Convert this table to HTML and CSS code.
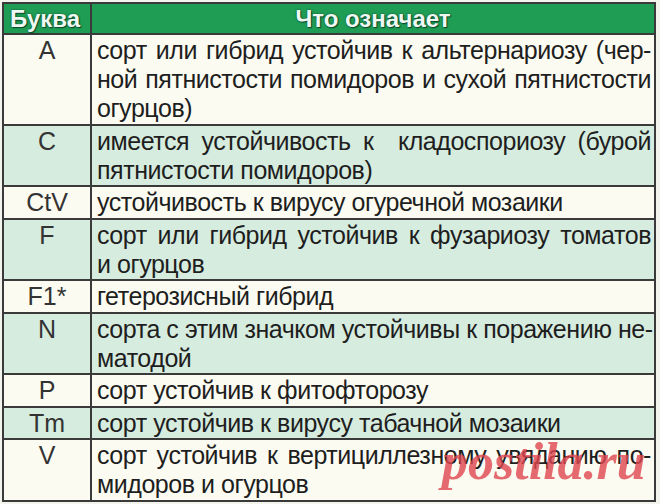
FILE: index.html
```html
<!DOCTYPE html>
<html lang="ru">
<head>
<meta charset="utf-8">
<link rel="stylesheet" href="styles.css">
</head>
<body>
<div class="page">
<div class="codes">
<div class="hd hd-letter">Буква</div><div class="hd hd-desc">Что означает</div>

<div class="letter light">A</div><div class="desc light"><span class="j">сорт или гибрид устойчив к альтернариозу (чер-</span><span class="j">ной пятнистости помидоров и сухой пятнистости</span><span class="l">огурцов)</span></div>
<div class="letter green">C</div><div class="desc green"><span class="j">имеется устойчивость к &nbsp;кладоспориозу (бурой</span><span class="l">пятнистости помидоров)</span></div>
<div class="letter light">CtV</div><div class="desc light"><span class="l">устойчивость к вирусу огуречной мозаики</span></div>
<div class="letter green">F</div><div class="desc green"><span class="j">сорт или гибрид устойчив к фузариозу томатов</span><span class="l">и огурцов</span></div>
<div class="letter light">F1*</div><div class="desc light"><span class="l">гетерозисный гибрид</span></div>
<div class="letter green">N</div><div class="desc green"><span class="j">сорта с этим значком устойчивы к поражению не-</span><span class="l">матодой</span></div>
<div class="letter light">P</div><div class="desc light"><span class="l">сорт устойчив к фитофторозу</span></div>
<div class="letter green">Tm</div><div class="desc green"><span class="l">сорт устойчив к вирусу табачной мозаики</span></div>
<div class="letter light">V</div><div class="desc light"><span class="j">сорт устойчив к вертициллезному увяданию по-</span><span class="l">мидоров и огурцов</span></div>
</div>
<div class="watermark">postila.ru</div>
</div>
</body>
</html>
```
FILE: styles.css
```css
html, body {
  margin: 0;
  padding: 0;
  background: #f4f4ee;
}
.page {
  position: relative;
  width: 660px;
  height: 504px;
  overflow: hidden;
  padding: 2px 0 0 2px;
  box-sizing: border-box;
}
.codes {
  display: grid;
  grid-template-columns: 86px minmax(0, 1fr);
  gap: 2px;
  padding: 2px;
  width: 654px;
  box-sizing: border-box;
  background: #3a3a3a;
  font-family: "Liberation Sans", Arial, sans-serif;
  font-size: 25px;
  color: #1e1e1e;
}
.hd {
  background: #1f9d55;
  color: #eef8f2;
  font-weight: bold;
  font-size: 24px;
  height: 29px;
  line-height: 29px;
  text-shadow: 0 0 2px #0b4a2a, 1px 1px 1px #0b4a2a;
}
.hd-letter { padding-left: 6px; }
.hd-desc { text-align: center; }
.letter {
  text-align: center;
  color: #333;
  line-height: 29px;
  padding: 1px 0 0.5px;
}
.desc {
  line-height: 29px;
  padding: 1px 3px 0.5px 5px;
  letter-spacing: -0.45px;
  overflow: hidden;
}
.light { background: #fbfbf1; }
.green { background: #d6ecde; }
.j {
  display: block;
  white-space: nowrap;
  text-align: justify;
  text-align-last: justify;
}
.l {
  display: block;
  white-space: nowrap;
  text-align: left;
}
.watermark {
  position: absolute;
  left: 442px;
  top: 430px;
  font-family: "Liberation Serif", "Times New Roman", serif;
  font-style: italic;
  font-weight: bold;
  font-size: 52px;
  letter-spacing: 0;
  line-height: 64px;
  color: rgba(224, 70, 80, 0.8);
}
```
